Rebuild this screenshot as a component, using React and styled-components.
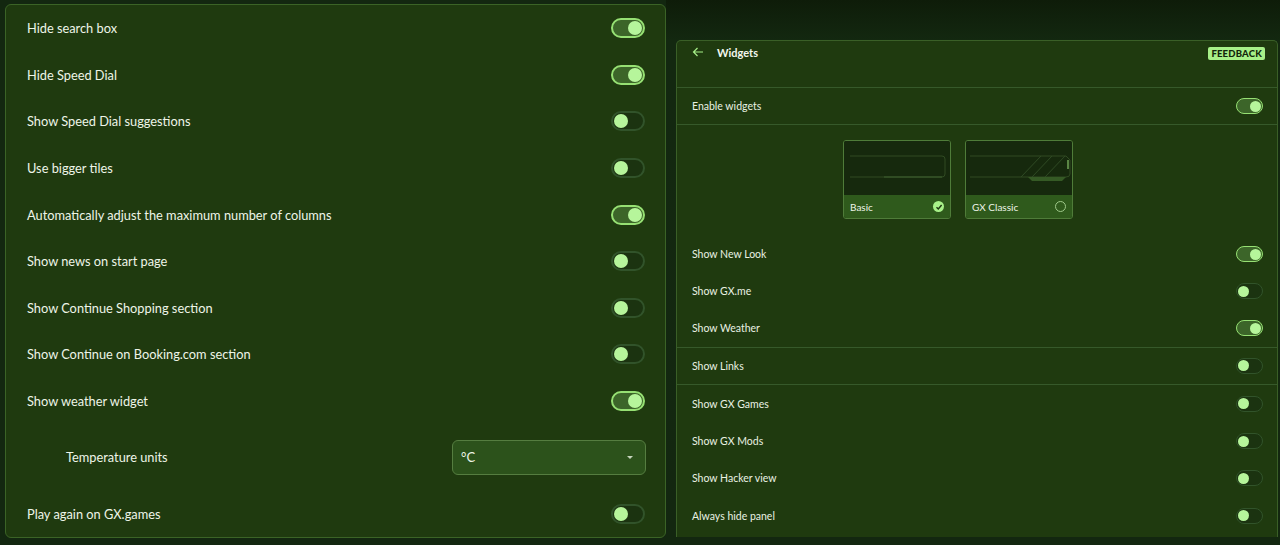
import React from "react";
import styled, { createGlobalStyle } from "styled-components";

const GlobalStyle = createGlobalStyle`
    html, body {
        margin: 0;
        padding: 0;
        background: #142a0d;
        font-family: Lato, "Noto Sans", sans-serif;
        color: #eef5e8;
    }
    #root {
        width: 1280px;
        height: 545px;
        overflow: hidden;
    }
`;

const leftRows = [
    { label: "Hide search box", on: true },
    { label: "Hide Speed Dial", on: true },
    { label: "Show Speed Dial suggestions", on: false },
    { label: "Use bigger tiles", on: false },
    { label: "Automatically adjust the maximum number of columns", on: true },
    { label: "Show news on start page", on: false },
    { label: "Show Continue Shopping section", on: false },
    { label: "Show Continue on Booking.com section", on: false },
    { label: "Show weather widget", on: true },
];

const Toggle = ({ on, small }) => (
    <Track $on={on} $small={small}>
        <Knob $on={on} $small={small} />
    </Track>
);

const PreviewBasic = () => (
    <svg width="106" height="54" viewBox="0 0 106 54">
        <path d="M6 15 H98 Q101 15 101 18 V33 Q101 36 98 36 H6" fill="none" stroke="#304b22" strokeWidth="1" />
        <path d="M40 36 H98" stroke="#3e6130" strokeWidth="1" />
    </svg>
);

const PreviewClassic = () => (
    <svg width="106" height="54" viewBox="0 0 106 54">
        <path d="M4 15 H100 L104 19 V33 Q104 36 100 36 H4" fill="none" stroke="#304b22" strokeWidth="1" />
        <path d="M55 36 L75 15 M66 36 L86 15 M79 36 L99 15" stroke="#2f4a24" strokeWidth="1" />
        <path d="M62 36 H100 L96 40 H66 Z" fill="#355a25" />
        <path d="M102 19 V28" stroke="#5a8544" strokeWidth="2" />
    </svg>
);

export default function App() {
    return (
        <>
            <GlobalStyle />
            <Page>
                <LeftPanel>
                    {leftRows.map(r => (
                        <Row key={r.label}>
                            <Label>{r.label}</Label>
                            <Toggle on={r.on} />
                        </Row>
                    ))}
                    <TempRow>
                        <Label>Temperature units</Label>
                        <Select>
                            <span>°C</span>
                            <Caret />
                        </Select>
                    </TempRow>
                    <Row>
                        <Label>Play again on GX.games</Label>
                        <Toggle on={false} />
                    </Row>
                </LeftPanel>
                <RightArea>
                    <RightPanel>
                        <Header>
                            <HeaderTitle>
                                <svg width="12" height="12" viewBox="0 0 12 12">
                                    <path d="M11 6 H1.5 M5.5 2 L1.5 6 L5.5 10" fill="none" stroke="#a6ee88" strokeWidth="1.2" />
                                </svg>
                                <span>Widgets</span>
                            </HeaderTitle>
                            <Badge>FEEDBACK</Badge>
                        </Header>
                        <SmallRow $divider>
                            <SmallLabel>Enable widgets</SmallLabel>
                            <Toggle on small />
                        </SmallRow>
                        <Cards>
                            <Card>
                                <Preview><PreviewBasic /></Preview>
                                <CardFoot>
                                    <span>Basic</span>
                                    <Check $checked>
                                        <svg width="8" height="8" viewBox="0 0 8 8">
                                            <path d="M1.5 4.2 L3.3 6 L6.6 2" fill="none" stroke="#1c3510" strokeWidth="1.4" />
                                        </svg>
                                    </Check>
                                </CardFoot>
                            </Card>
                            <Card>
                                <Preview><PreviewClassic /></Preview>
                                <CardFoot>
                                    <span>GX Classic</span>
                                    <Check />
                                </CardFoot>
                            </Card>
                        </Cards>
                        <SmallRow>
                            <SmallLabel>Show New Look</SmallLabel>
                            <Toggle on small />
                        </SmallRow>
                        <SmallRow>
                            <SmallLabel>Show GX.me</SmallLabel>
                            <Toggle on={false} small />
                        </SmallRow>
                        <SmallRow $divider>
                            <SmallLabel>Show Weather</SmallLabel>
                            <Toggle on small />
                        </SmallRow>
                        <SmallRow $divider>
                            <SmallLabel>Show Links</SmallLabel>
                            <Toggle on={false} small />
                        </SmallRow>
                        <SmallRow>
                            <SmallLabel>Show GX Games</SmallLabel>
                            <Toggle on={false} small />
                        </SmallRow>
                        <SmallRow>
                            <SmallLabel>Show GX Mods</SmallLabel>
                            <Toggle on={false} small />
                        </SmallRow>
                        <SmallRow>
                            <SmallLabel>Show Hacker view</SmallLabel>
                            <Toggle on={false} small />
                        </SmallRow>
                        <SmallRow>
                            <SmallLabel>Always hide panel</SmallLabel>
                            <Toggle on={false} small />
                        </SmallRow>
                    </RightPanel>
                </RightArea>
            </Page>
        </>
    );
}

const Page = styled.div`
    display: flex;
    align-items: flex-start;
    height: 545px;
    padding: 4px 0 0 5px;
    box-sizing: border-box;
    background: #132710;
`;

const LeftPanel = styled.div`
    width: 661px;
    height: 534px;
    box-sizing: border-box;
    background: #1f3a0f;
    border: 1px solid #3b6326;
    border-radius: 6px;
    display: flex;
    flex-direction: column;
`;

const Row = styled.div`
    height: 46.6px;
    display: flex;
    align-items: center;
    justify-content: space-between;
    padding: 0 20px 0 21px;
`;

const TempRow = styled(Row)`
    height: 66px;
    padding-left: 60px;
`;

const Label = styled.div`
    font-size: 12.8px;
    color: #eef5e8;
`;

const Track = styled.div`
    width: ${p => p.$small ? 27 : 34}px;
    height: ${p => p.$small ? 16 : 20}px;
    box-sizing: border-box;
    border-radius: 10px;
    border: ${p => p.$small ? 1.5 : 2}px solid ${p => p.$on ? "#96e073" : "#31532a"};
    background: ${p => p.$on ? "#3c6529" : "#1b3310"};
    display: flex;
    align-items: center;
    justify-content: ${p => p.$on ? "flex-end" : "flex-start"};
    padding: 0 1px;
`;

const Knob = styled.div`
    width: ${p => p.$small ? 11 : 14}px;
    height: ${p => p.$small ? 11 : 14}px;
    border-radius: 50%;
    background: #b6f59b;
`;

const Select = styled.div`
    width: 194px;
    height: 35px;
    box-sizing: border-box;
    margin-right: -1px;
    padding: 0 12px 0 8px;
    display: flex;
    align-items: center;
    justify-content: space-between;
    background: #2c521b;
    border: 1px solid #557d40;
    border-radius: 6px;
    font-size: 13px;
    color: #eef5e8;
`;

const Caret = styled.div`
    width: 0;
    height: 0;
    border-left: 3.5px solid transparent;
    border-right: 3.5px solid transparent;
    border-top: 3.5px solid #c7d6bd;
`;

const RightArea = styled.div`
    flex: 1;
    height: 541px;
    margin-top: -4px;
    padding: 40px 0 0 10px;
    box-sizing: border-box;
    background: linear-gradient(180deg, #0e1c09 0px, #132810 40px, #132710 100%);
`;

const RightPanel = styled.div`
    width: 602px;
    height: 497px;
    box-sizing: border-box;
    background: #1f3a0f;
    border: 1px solid #3a5f27;
    border-radius: 5px 5px 0 0;
    border-bottom: none;
    display: flex;
    flex-direction: column;
`;

const Header = styled.div`
    height: 47px;
    flex-shrink: 0;
    box-sizing: border-box;
    display: flex;
    align-items: flex-start;
    justify-content: space-between;
    padding: 5px 12px 0 15px;
    border-bottom: 1px solid #36592a;
`;

const HeaderTitle = styled.div`
    display: flex;
    align-items: center;
    gap: 13px;
    height: 14px;
    margin-top: -1px;
    font-size: 11px;
    font-weight: 700;
    color: #f2f7ee;
`;

const Badge = styled.div`
    margin-top: 1px;
    background: #a7f088;
    color: #12250a;
    font-size: 9.5px;
    font-weight: 900;
    letter-spacing: 0.2px;
    padding: 1px 3px;
    border-radius: 2px;
`;

const SmallRow = styled.div`
    height: 37.4px;
    flex-shrink: 0;
    box-sizing: border-box;
    display: flex;
    align-items: center;
    justify-content: space-between;
    padding: 0 14px 0 15px;
    border-bottom: ${p => p.$divider ? "1px solid #36592a" : "none"};
`;

const SmallLabel = styled.div`
    font-size: 10.5px;
    color: #e9f1e3;
`;

const Cards = styled.div`
    height: 110px;
    flex-shrink: 0;
    box-sizing: border-box;
    display: flex;
    gap: 14px;
    padding: 15px 0 0 166px;
`;

const Card = styled.div`
    width: 108px;
    height: 79px;
    box-sizing: border-box;
    border: 1px solid #4f7c39;
    border-radius: 3px;
    overflow: hidden;
    display: flex;
    flex-direction: column;
`;

const Preview = styled.div`
    height: 54px;
    background: #16290d;
    display: flex;
`;

const CardFoot = styled.div`
    flex: 1;
    background: #2f5a1c;
    display: flex;
    align-items: center;
    justify-content: space-between;
    padding: 0 6px 0 6px;
    font-size: 10px;
    color: #eef5e8;
`;

const Check = styled.div`
    width: 11px;
    height: 11px;
    box-sizing: border-box;
    border-radius: 50%;
    border: ${p => p.$checked ? "none" : "1px solid #9fc98a"};
    background: ${p => p.$checked ? "#a7f088" : "transparent"};
    display: flex;
    align-items: center;
    justify-content: center;
`;
